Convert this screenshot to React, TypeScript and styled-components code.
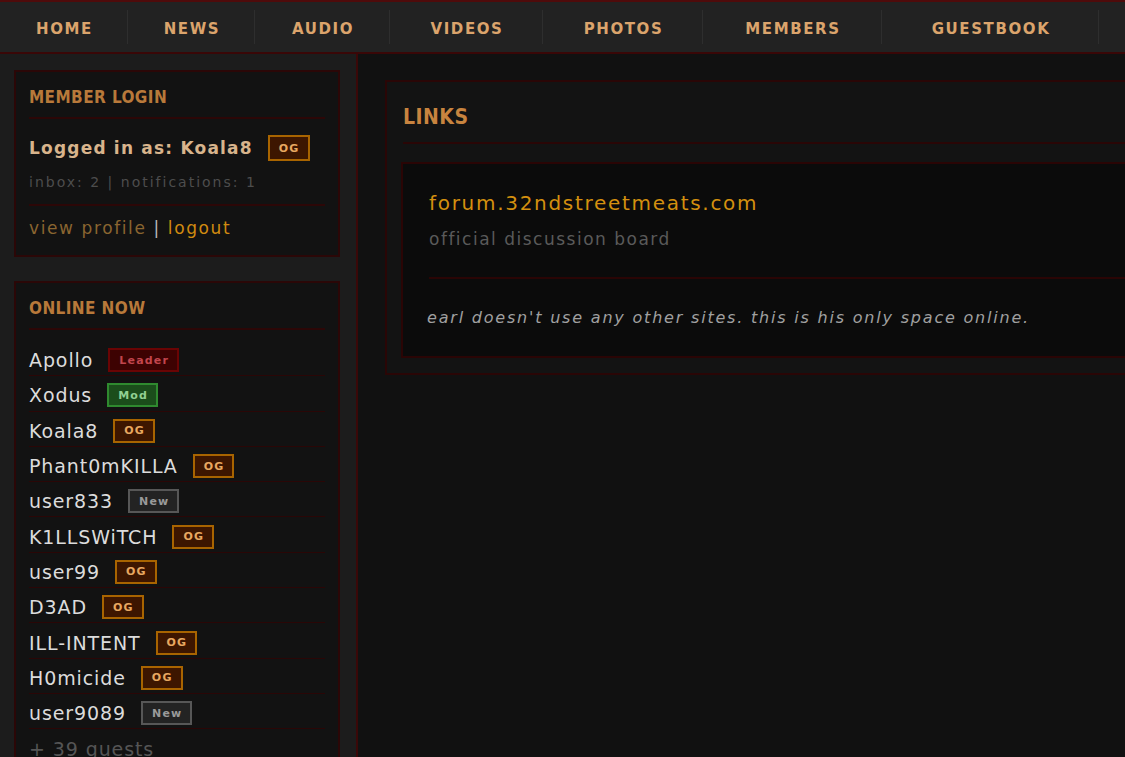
import React from "react";
import styled, { createGlobalStyle } from "styled-components";

const Global = createGlobalStyle`
  html, body { margin: 0; padding: 0; background: #111; overflow: hidden; }
  body { font-family: "DejaVu Sans", Verdana, sans-serif; }
  * { box-sizing: border-box; }
`;

const Page = styled.div`
  width: 1320px;
  min-height: 757px;
  display: flex;
  flex-direction: column;
  background: #111;
`;

const Nav = styled.nav`
  display: flex;
  align-items: center;
  height: 54px;
  background: #222;
  border-top: 2px solid #4f0b0b;
  border-bottom: 2px solid #3a0707;
  white-space: nowrap;
  overflow: hidden;
`;

const NavItem = styled.a<{ $w: number }>`
  flex: 0 0 ${(p) => p.$w}px;
  height: 34px;
  display: flex;
  align-items: center;
  justify-content: center;
  padding: 3px 0 0 2px;
  border-right: 1px solid #2e2e2e;
  color: #dba46c;
  font: bold 15px "DejaVu Sans", sans-serif;
  letter-spacing: 1.6px;
  text-decoration: none;
`;

const Body = styled.div`
  display: flex;
  flex: 1;
`;

const Sidebar = styled.aside`
  flex: 0 0 358px;
  min-height: 703px;
  background: #1c1c1c;
  border-right: 2px solid #3b0808;
  padding: 16px 16px 0 14px;
  display: flex;
  flex-direction: column;
  gap: 24px;
`;

const Box = styled.section`
  background: #121212;
  border: 2px solid #2b0707;
  padding: 16px 13px 16px;
`;

const BoxTitle = styled.h3`
  margin: 0;
  font: bold 17px/18px "DejaVu Sans Condensed", "DejaVu Sans", sans-serif;
  color: #b8793a;
  letter-spacing: 0.4px;
  padding-bottom: 11px;
  border-bottom: 2px solid #2c0707;
`;

const LoggedRow = styled.div`
  margin-top: 16px;
  height: 26px;
  display: flex;
  align-items: center;
  gap: 15px;
`;

const LoggedText = styled.span`
  font: bold 17px/20px "DejaVu Sans", sans-serif;
  letter-spacing: 1.2px;
  color: #d8b48c;
`;

const InboxLine = styled.div`
  margin-top: 12px;
  padding-bottom: 13px;
  border-bottom: 2px solid #2c0707;
  font: 14px/18px "DejaVu Sans", sans-serif;
  letter-spacing: 2px;
  color: #4d4d4d;
`;

const ActionLine = styled.div`
  margin-top: 11px;
  font: 17px/22px "DejaVu Sans", sans-serif;
  letter-spacing: 1.6px;
  color: #bbb;
`;

const ActionLink = styled.a<{ $bright?: boolean }>`
  color: ${(p) => (p.$bright ? "#d08a10" : "#8a6530")};
  text-decoration: none;
`;

type BadgeKind = "leader" | "mod" | "og" | "new";

const badgeColors: Record<BadgeKind, { bg: string; bd: string; fg: string }> = {
  leader: { bg: "#3d0202", bd: "#6a0404", fg: "#c2454d" },
  mod: { bg: "#1b4d1b", bd: "#2f8a2f", fg: "#92d092" },
  og: { bg: "#3d1600", bd: "#a86400", fg: "#e8a860" },
  new: { bg: "#232323", bd: "#575757", fg: "#9a9a9a" },
};

const Badge = styled.span<{ $kind: BadgeKind; $tall?: boolean }>`
  display: inline-flex;
  align-items: center;
  justify-content: center;
  height: ${(p) => (p.$tall ? 26 : 24)}px;
  padding: 0 8px 0 9px;
  background: ${(p) => badgeColors[p.$kind].bg};
  border: 2px solid ${(p) => badgeColors[p.$kind].bd};
  color: ${(p) => badgeColors[p.$kind].fg};
  font: bold 11px "DejaVu Sans", sans-serif;
  letter-spacing: 1.2px;
`;

const OnlineList = styled.ul`
  list-style: none;
  margin: 11px 0 0;
  padding: 0;
`;

const OnlineRow = styled.li<{ $last?: boolean }>`
  height: 35.3px;
  padding-top: 4px;
  display: flex;
  align-items: center;
  gap: 15px;
  border-bottom: ${(p) => (p.$last ? "none" : "1px solid #2a0606")};
`;

const Name = styled.span`
  font: 19px/24px "DejaVu Sans", sans-serif;
  letter-spacing: 0.9px;
  color: #dcdcdc;
`;

const Guests = styled.span`
  font: 19px/24px "DejaVu Sans", sans-serif;
  letter-spacing: 0.9px;
  color: #555;
`;

const Main = styled.main`
  flex: 1;
  padding: 26px 27px;
`;

const Panel = styled.section`
  border: 2px solid #2a0606;
  background: #131313;
  padding: 0 14px 15px 14px;
`;

const PanelTitle = styled.h2`
  margin: 0 0 0 2px;
  padding: 24px 0 14px;
  border-bottom: 2px solid #2a0606;
  font: bold 21px/22px "DejaVu Sans Condensed", "DejaVu Sans", sans-serif;
  letter-spacing: 0.5px;
  color: #c8843f;
`;

const LinkCard = styled.div`
  margin-top: 18px;
  border: 2px solid #2a0505;
  background: #0b0b0b;
  padding: 26px 26px 27px;
`;

const LinkItem = styled.div`
  padding-bottom: 26px;
  border-bottom: 2px solid #2a0505;
`;

const LinkTitle = styled.a`
  display: block;
  font: 20px/26px "DejaVu Sans", sans-serif;
  letter-spacing: 1.7px;
  color: #d4900f;
  text-decoration: none;
`;

const LinkDesc = styled.div`
  margin-top: 11px;
  font: 17px/24px "DejaVu Sans", sans-serif;
  letter-spacing: 1.5px;
  color: #5a5a5a;
`;

const Note = styled.p`
  margin: 28px 0 0 -2px;
  font: italic 16px/22px "DejaVu Sans", sans-serif;
  letter-spacing: 1.8px;
  color: #a0a0a0;
`;

const navItems: [string, number][] = [
  ["HOME", 128],
  ["NEWS", 127],
  ["AUDIO", 135],
  ["VIDEOS", 153],
  ["PHOTOS", 160],
  ["MEMBERS", 179],
  ["GUESTBOOK", 217],
];

const online: [string, BadgeKind][] = [
  ["Apollo", "leader"],
  ["Xodus", "mod"],
  ["Koala8", "og"],
  ["Phant0mKILLA", "og"],
  ["user833", "new"],
  ["K1LLSWiTCH", "og"],
  ["user99", "og"],
  ["D3AD", "og"],
  ["ILL-INTENT", "og"],
  ["H0micide", "og"],
  ["user9089", "new"],
];

const badgeLabel: Record<BadgeKind, string> = {
  leader: "Leader",
  mod: "Mod",
  og: "OG",
  new: "New",
};

export default function App() {
  return (
    <Page>
      <Global />
      <Nav>
        {navItems.map(([label, w]) => (
          <NavItem key={label} $w={w} href="#">
            {label}
          </NavItem>
        ))}
      </Nav>
      <Body>
        <Sidebar>
          <Box>
            <BoxTitle>MEMBER LOGIN</BoxTitle>
            <LoggedRow>
              <LoggedText>Logged in as: Koala8</LoggedText>
              <Badge $kind="og" $tall>
                OG
              </Badge>
            </LoggedRow>
            <InboxLine>inbox: 2 | notifications: 1</InboxLine>
            <ActionLine>
              <ActionLink href="#">view profile</ActionLink> |{" "}
              <ActionLink href="#" $bright>
                logout
              </ActionLink>
            </ActionLine>
          </Box>
          <Box>
            <BoxTitle>ONLINE NOW</BoxTitle>
            <OnlineList>
              {online.map(([name, kind]) => (
                <OnlineRow key={name}>
                  <Name>{name}</Name>
                  <Badge $kind={kind}>{badgeLabel[kind]}</Badge>
                </OnlineRow>
              ))}
              <OnlineRow $last>
                <Guests>+ 39 guests</Guests>
              </OnlineRow>
            </OnlineList>
          </Box>
        </Sidebar>
        <Main>
          <Panel>
            <PanelTitle>LINKS</PanelTitle>
            <LinkCard>
              <LinkItem>
                <LinkTitle href="#">forum.32ndstreetmeats.com</LinkTitle>
                <LinkDesc>official discussion board</LinkDesc>
              </LinkItem>
              <Note>earl doesn't use any other sites. this is his only space online.</Note>
            </LinkCard>
          </Panel>
        </Main>
      </Body>
    </Page>
  );
}
